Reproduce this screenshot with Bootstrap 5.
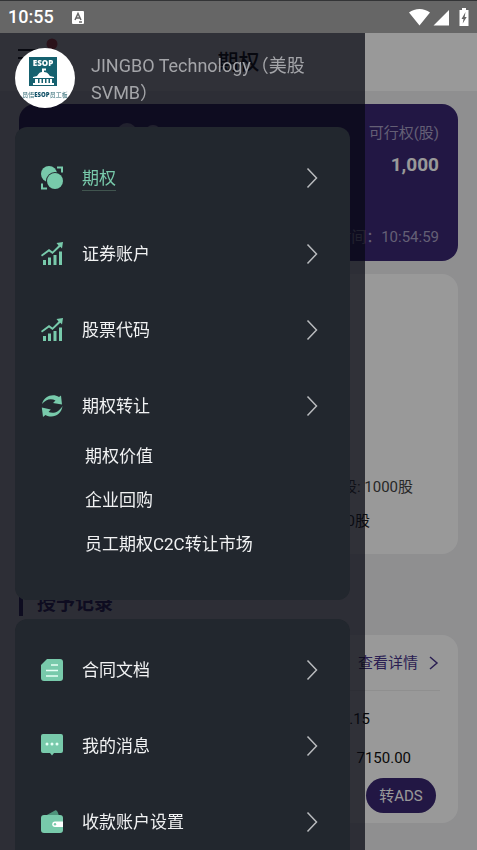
<!DOCTYPE html>
<html lang="zh-CN">
<head>
<meta charset="utf-8">
<meta name="viewport" content="width=device-width, initial-scale=1">
<title>期权</title>
<link rel="stylesheet" href="https://cdn.jsdelivr.net/npm/bootstrap@5.3.0/dist/css/bootstrap.min.css">
<style>
:root{--ink:#392772;--mint:#78caab;--bar:33px}
body{font-family:Roboto,"Noto Sans CJK SC",sans-serif;background:#eeeef1;color:#111;font-size:15px;line-height:24px;overflow:hidden}
.status-bar{position:fixed;inset:0 0 auto 0;height:var(--bar);z-index:30;background:#666;border-top:1px solid #333436;color:#fff;padding:0 8px}
.clock{font-size:18px;font-weight:500}
.app{padding-top:var(--bar)}
.top-nav{height:58px;background:#fff;padding:0 19px}
.top-nav h1{font-size:21px;font-weight:500;line-height:32px;padding-right:40px}
.menu-btn{width:40px;height:32px;background:none;border:0;padding:0}
.content{padding:13px 19px 26px}
.sheet{border-radius:16px;background:#fff}
.summary{background:var(--ink);color:#a79fc3;height:157px;padding:17px 19px 12px 98px}
.summary strong{font-size:19px;color:#fff;font-weight:700}
.dot-btn{width:20px;height:20px;border-radius:50%;background:#a79fc3;border:0;padding:0}
.dot-btn.tiny{width:16px;height:16px}
.chart{min-height:280px;margin-top:13px;padding:0 45px 16px 0}
.chart div{line-height:34px;color:#444}
.chart .second{padding-right:43px;color:#222}
.section-title{font-size:19px;line-height:24px;font-weight:700;color:var(--ink);border-left:4px solid var(--ink);padding-left:14px;margin:38px 0 19px}
.grant{padding:0 18px 10px}
.grant-head{height:56px;border-bottom:1px solid #eee;margin-bottom:9px}
.grant-head a{color:#47348a;text-decoration:none;gap:10px}
.figure-a{padding-right:70px;line-height:39px}
.figure-b{padding-right:29px;line-height:39px}
.btn-ads{background:var(--ink);color:#fff;border:0;border-radius:18px;height:35px;width:70px;padding:0;font-size:15px;margin-right:4px}
.dim{position:fixed;inset:var(--bar) 0 0 0;background:rgba(0,0,0,.4);z-index:10}
.drawer{position:fixed;top:var(--bar);bottom:0;left:0;width:76.5%;z-index:20;background:rgba(7,9,18,.72);padding:15px 15px 0;overflow:hidden}
.profile{height:60px;margin-bottom:19px}
.avatar{width:60px;height:60px}
.company{color:#a4a5a9;font-size:18px;line-height:27px;padding-top:4px}
.menu-box{background:#22272e;border-radius:12px;padding:23px 32px 34px 26px;margin-bottom:19px}
.menu-row{height:56px;margin-bottom:20px;color:#f1f2f3;text-decoration:none;font-size:17px}
.menu-row.last{margin-bottom:0}
.menu-row span{margin:0 auto 0 19px}
.menu-row.on span{color:var(--mint);border-bottom:1px solid #41554f}
.chev{width:12px;height:22px;color:#b9bbbe}
.sub-list a{display:block;padding-left:44px;line-height:44px;color:#f1f2f3;text-decoration:none;font-size:17px}
</style>
<script src="https://cdn.jsdelivr.net/npm/bootstrap@5.3.0/dist/js/bootstrap.bundle.min.js"></script>
</head>
<body>
<svg class="d-none" aria-hidden="true">
  <symbol id="next" viewBox="0 0 12 22"><path d="M1.500 1.500 10.500 11l-9 9.500" fill="none" stroke="currentColor" stroke-width="1.500"/></symbol>
  <symbol id="growth" viewBox="0 0 22 24"><path fill="#78caab" d="M2 18h3v5H2zM7 15.500h3V23H7zM12.500 13h3v10h-3zM18 9.500h3V23h-3zM15.500 1 22 0l-1 6.500-1.700-1.700-7.800 7.200-3.500-2.500L1 14.500 0 13l8-6 3.500 2.500 6-6z"/></symbol>
</svg>

<div class="status-bar d-flex align-items-center">
  <span class="clock">10:55</span>
  <svg class="ms-3" width="15" height="15" viewBox="0 0 15 15"><rect x="2" y="1" width="12" height="13" rx="1" fill="#fff"/><path d="M5 10 8 3.500l3 6.500M6 8h4M9 12h3" stroke="#666" stroke-width="1.500" fill="none"/></svg>
  <svg class="ms-auto" width="60" height="20" viewBox="0 0 60 20" fill="#fff"><path d="M0 5.500C6 .8 15 .8 21 5.500L10.500 18.500zM40 3v15.500H24.500z"/><path d="M53 1h4v2h2.500v16h-9V3H53z"/><path d="m56.500 5-4 7h2l-.8 4.500 4-6.500h-2z" fill="#666"/></svg>
</div>

<main class="app">
  <header class="top-nav d-flex align-items-center">
    <button class="menu-btn" aria-label="菜单"><svg width="40" height="32" viewBox="0 0 40 32" overflow="visible"><path d="M-1 4h19M-1 12h13M-1 20h19" stroke="#111" stroke-width="2"/><circle cx="33" cy="-2" r="5.500" fill="#d9484d"/></svg></button>
    <h1 class="flex-grow-1 text-center mb-0">期权</h1>
  </header>
  <div class="content">
    <section class="sheet summary d-flex flex-column" id="summary">
      <div class="d-flex align-items-center gap-2"><button class="dot-btn" aria-label="显示"></button><button class="dot-btn tiny" aria-label="说明"></button><span class="ms-auto">可行权(股)</span></div>
      <strong class="text-end mt-2">1,000</strong>
      <div class="mt-auto text-end">时间：10:54:59</div>
    </section>
    <section class="sheet chart text-end d-flex flex-column justify-content-end" id="chart"><div>股: 1000股</div><div class="second">0股</div></section>
    <h2 class="section-title">授予记录</h2>
    <section class="sheet grant text-end" id="grant">
      <div class="grant-head d-flex justify-content-end align-items-center"><a href="#grant" class="d-flex align-items-center">查看详情 <svg width="12" height="14" viewBox="0 0 12 14"><path d="m2 1 7 6-7 6" fill="none" stroke="currentColor" stroke-width="1.500"/></svg></a></div>
      <div class="figure-a">.15</div>
      <div class="figure-b">7150.00</div>
      <button class="btn-ads">转ADS</button>
    </section>
  </div>
</main>

<div class="dim"></div>
<aside class="drawer">
  <div class="profile d-flex">
    <svg class="avatar flex-shrink-0 me-3" viewBox="0 0 60 60" role="img" aria-label="ESOP">
      <clipPath id="disc"><circle cx="30" cy="30" r="30"/></clipPath>
      <g clip-path="url(#disc)">
        <path fill="#fff" d="M0 0h60v60H0z"/><path fill="#15616f" d="M14 9h28v29H14z"/>
        <text x="28" y="18" text-anchor="middle" font-family="Open Sans" font-weight="800" font-size="8" fill="#fff">ESOP</text>
        <path fill="#fff" d="M28 20.500h3v2h-2V24c4 0 5 3 6 4l4 1v1H18v-1l4-1c1-1 2-4 5-4v-3.500zM20 31h3v4h-3zM24.500 31h2v4h-2zM28 31h2v4h-2zM31.500 31h2v4h-2zM35 31h2v4h-2zM18 35h21v2H18z"/>
        <text x="30" y="49" text-anchor="middle" font-family="Open Sans,Noto Sans CJK SC" font-size="6" fill="#2b6670">员悟<tspan font-weight="800" fill="#15546a">ESOP</tspan>员工板</text>
      </g>
    </svg>
    <div class="company">JINGBO Technology（美股SVMB）</div>
  </div>
  <nav class="menu-box">
    <a class="menu-row on d-flex align-items-center" href="#summary"><svg width="22" height="24" viewBox="0 0 22 24"><g fill="#78caab"><circle cx="8" cy="8" r="8"/><circle cx="14" cy="15" r="9" fill="#22272e"/><circle cx="14" cy="15" r="8"/><path d="M16 .5h6v6h-2v-4h-4zM0 17.500h2v4h4v2H0z"/></g></svg><span>期权</span><svg class="chev"><use href="#next"/></svg></a>
    <a class="menu-row d-flex align-items-center" href="#chart"><svg width="22" height="24"><use href="#growth"/></svg><span>证券账户</span><svg class="chev"><use href="#next"/></svg></a>
    <a class="menu-row d-flex align-items-center" href="#chart"><svg width="22" height="24"><use href="#growth"/></svg><span>股票代码</span><svg class="chev"><use href="#next"/></svg></a>
    <a class="menu-row last d-flex align-items-center" href="#transfer"><svg width="22" height="24" viewBox="0 0 22 24"><path fill="#78caab" d="M1 10C3 2 12-1 18 3l2-1.500 1 9-9-1.500 2.500-2.500C10 4 5 5 1 10zM21.500 12c-1 9-10 13-17 9L2 23 .8 13.500l9 2L7.500 18c5 2 10 .5 14-6z"/></svg><span>期权转让</span><svg class="chev"><use href="#next"/></svg></a>
    <div class="sub-list" id="transfer"><a href="#transfer">期权价值</a><a href="#transfer">企业回购</a><a href="#transfer">员工期权C2C转让市场</a></div>
  </nav>
  <nav class="menu-box">
    <a class="menu-row d-flex align-items-center" href="#grant"><svg width="22" height="24" viewBox="0 0 22 24"><path fill="#78caab" d="M6 1h13a3 3 0 0 1 3 3v16a3 3 0 0 1-3 3H3a3 3 0 0 1-3-3V7z"/><path d="M10 7h7M5 12.500h12M5 18h12" stroke="#e6fff5" stroke-width="1.500"/></svg><span>合同文档</span><svg class="chev"><use href="#next"/></svg></a>
    <a class="menu-row d-flex align-items-center" href="#grant"><svg width="22" height="24" viewBox="0 0 22 24"><path fill="#78caab" d="M2 0h18a2 2 0 0 1 2 2v15a2 2 0 0 1-2 2h-7l-2 2.500L9 19H2a2 2 0 0 1-2-2V2a2 2 0 0 1 2-2z"/><g fill="#e6fff5"><circle cx="6" cy="10" r="1.500"/><circle cx="11" cy="10" r="1.500"/><circle cx="16" cy="10" r="1.500"/></g></svg><span>我的消息</span><svg class="chev"><use href="#next"/></svg></a>
    <a class="menu-row last d-flex align-items-center" href="#grant"><svg width="22" height="24" viewBox="0 0 22 24"><path fill="#4f957c" d="m4 6 10-5.500c2-1 3 2 4 5.500z"/><rect y="5" width="22" height="18" rx="3" fill="#78caab"/><path fill="#fff" d="M22 11.500v5.500h-8a2.700 2.700 0 0 1 0-5.500z"/><circle cx="14" cy="14.200" r="1.200" fill="#78caab"/></svg><span>收款账户设置</span><svg class="chev"><use href="#next"/></svg></a>
  </nav>
</aside>
</body>
</html>
